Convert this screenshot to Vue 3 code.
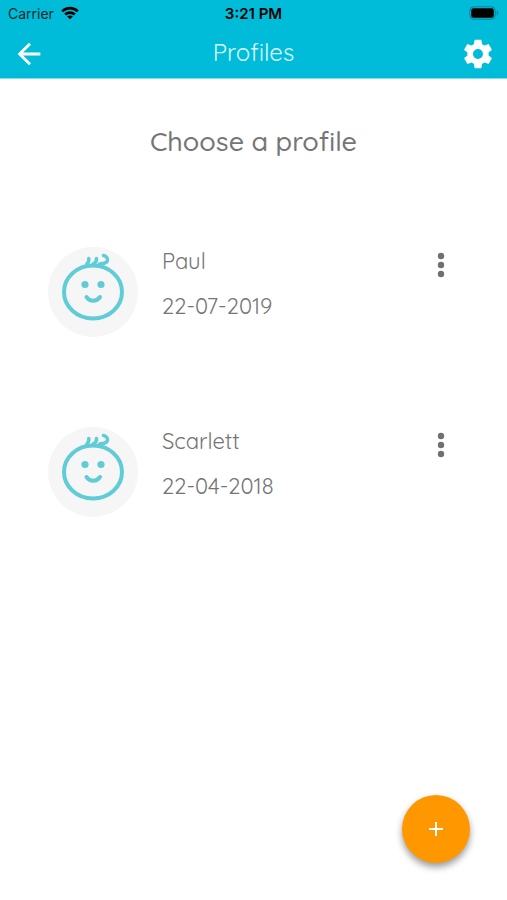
<template>
  <div class="screen">
    <header class="app-header">
      <!-- Status bar -->
      <div class="status-bar">
        <div class="carrier">
          <span>Carrier</span>
          <svg class="wifi" viewBox="0 0 20 14" aria-hidden="true">
            <path d="M1.300 5.200a12.300 12.300 0 0 1 17.400 0" />
            <path d="M4.600 8.700a7.700 7.700 0 0 1 10.800 0" />
            <path class="wifi-dot" d="M6.800 11a4.500 4.500 0 0 1 6.400 0L10 14z" />
          </svg>
        </div>
        <span class="time">3:21 PM</span>
        <div class="battery">
          <svg viewBox="0 0 30 14" aria-hidden="true">
            <rect class="battery-case" x="0.8" y="0.8" width="25.4" height="12.4" rx="4" />
            <rect x="2.2" y="2.2" width="22.600" height="9.600" rx="2.2" />
            <path class="battery-cap" d="M27.8 4.5v5c2-.8 2-4.2 0-5z" />
          </svg>
        </div>
      </div>

      <!-- Navigation -->
      <nav class="nav-bar">
        <button class="icon-btn" type="button" aria-label="Back">
          <svg viewBox="0 0 24 24">
            <path d="M20 11H7.83l5.59-5.59L12 4l-8 8 8 8 1.41-1.41L7.83 13H20v-2z" />
          </svg>
        </button>
        <h1 class="nav-title">Profiles</h1>
        <button class="icon-btn" type="button" aria-label="Settings">
          <svg viewBox="0 0 24 24">
            <path d="M19.43 12.98c.04-.32.07-.64.07-.98s-.03-.66-.07-.98l2.11-1.65c.19-.15.24-.42.12-.64l-2-3.46c-.12-.22-.39-.3-.61-.22l-2.49 1c-.52-.4-1.08-.73-1.69-.98l-.38-2.65C14.46 2.18 14.25 2 14 2h-4c-.25 0-.46.18-.49.42l-.38 2.65c-.61.25-1.17.59-1.69.98l-2.49-1c-.23-.09-.49 0-.61.22l-2 3.46c-.13.22-.07.49.12.64l2.11 1.65c-.04.32-.07.65-.07.98s.03.66.07.98l-2.11 1.65c-.19.15-.24.42-.12.64l2 3.46c.12.22.39.3.61.22l2.49-1c.52.4 1.08.73 1.69.98l.38 2.65c.03.24.24.42.49.42h4c.25 0 .46-.18.49-.42l.38-2.65c.61-.25 1.17-.59 1.69-.98l2.49 1c.23.09.49 0 .61-.22l2-3.46c.12-.22.07-.49-.12-.64l-2.11-1.65zM12 15.5c-1.93 0-3.5-1.57-3.5-3.5s1.57-3.5 3.5-3.5 3.5 1.57 3.5 3.5-1.57 3.5-3.5 3.5z" />
          </svg>
        </button>
      </nav>
    </header>

    <main class="content">
      <h2 class="heading">Choose a profile</h2>

      <ul class="profile-list">
        <li v-for="profile in profiles" :key="profile.name" class="profile">
          <div class="avatar">
            <svg viewBox="0 0 90 90" aria-hidden="true">
              <ellipse cx="45" cy="45" rx="29" ry="26.5" />
              <path class="hair" d="M40.800 11.500c.3 2.500-.6 4.500-2.300 6" />
              <path class="hair" d="M48.500 11.500c.3 2.800-1 4.500-3.500 5.500" />
              <path class="hair" d="M55.500 8.500c3.500.8 4.800 3.500 3.500 6-1.500 2.500-5 1.500-7.500 2.500" />
              <circle class="eye" cx="37" cy="37.500" r="3.600" />
              <circle class="eye" cx="53" cy="37.500" r="3.600" />
              <path d="M38.500 50c3 5 10 5 13.500 0" />
            </svg>
          </div>
          <div class="info">
            <span>{{ profile.name }}</span>
            <span>{{ profile.birthday }}</span>
          </div>
          <button class="menu-btn" type="button" :aria-label="`Options for ${profile.name}`">
            <svg viewBox="0 0 26 26">
              <circle cx="13" cy="4" r="3.2" />
              <circle cx="13" cy="13" r="3.2" />
              <circle cx="13" cy="22" r="3.2" />
            </svg>
          </button>
        </li>
      </ul>
    </main>

    <button class="add-btn" type="button" aria-label="Add profile">
      <svg viewBox="0 0 16 16">
        <path d="M8 1v14M1 8h14" />
      </svg>
    </button>
  </div>
</template>

<script setup>
import { ref } from 'vue';

const profiles = ref([
  { name: 'Paul', birthday: '22-07-2019' },
  { name: 'Scarlett', birthday: '22-04-2018' }
]);
</script>

<style>
body {
  margin: 0;
  background: #fff;
}
</style>

<style scoped>
.screen {
  min-height: 100vh;
  background: #fff;
  color: #757575;
  font-family: Quicksand, Lato, sans-serif;
}

button {
  padding: 0;
  border: none;
  background: none;
  cursor: pointer;
}

svg {
  display: block;
}

.app-header {
  background: #00bcd9;
  border-bottom: 1px solid #80deec;
}

.status-bar {
  display: grid;
  grid-template-columns: 1fr auto 1fr;
  align-items: center;
  height: 26px;
  padding: 0 8px;
  color: #06272c;
  font-family: Inter, sans-serif;
  font-size: 14px;
}

.carrier {
  display: flex;
  align-items: center;
  gap: 7px;
}

.wifi {
  width: 18px;
  height: 14px;
  fill: none;
  stroke: #000;
  stroke-width: 3;
}

.wifi-dot {
  fill: #000;
  stroke: none;
}

.time {
  color: #000;
  font-size: 15px;
  font-weight: 600;
}

.battery {
  justify-self: end;
}

.battery svg {
  width: 30px;
  height: 14px;
}

.battery-case {
  fill: none;
  stroke: #087f91;
  stroke-width: 1;
}

.battery-cap {
  fill: #087f91;
}

.nav-bar {
  display: flex;
  align-items: center;
  justify-content: space-between;
  height: 52px;
  padding: 0 12px;
}

.icon-btn svg {
  width: 34px;
  height: 34px;
  margin-top: 4px;
  fill: #fff;
}

.nav-title {
  margin: 0;
  color: #d9f9ff;
  font-size: 24px;
  font-weight: 400;
}

.content {
  padding: 44px 48px 0;
}

.heading {
  margin: 0;
  font-size: 27px;
  font-weight: 500;
  line-height: 36px;
  text-align: center;
}

.profile-list {
  display: flex;
  flex-direction: column;
  gap: 82px;
  margin: 80px 0 0;
  padding: 0;
  list-style: none;
}

.profile {
  display: flex;
  align-items: flex-start;
}

.avatar {
  width: 90px;
  height: 90px;
  margin-top: 8px;
  border-radius: 50%;
  background: #f6f6f6;
}

.avatar svg {
  width: 90px;
  height: 90px;
  fill: none;
  stroke: #5fccd6;
  stroke-width: 4;
  stroke-linecap: round;
}

.avatar .hair {
  stroke-width: 3.5;
}

.avatar .eye {
  fill: #5fccd6;
  stroke: none;
}

.info {
  display: flex;
  flex: 1;
  flex-direction: column;
  margin-left: 24px;
  color: #757575;
  font-size: 22px;
  line-height: 45px;
}

.menu-btn {
  margin-top: 13px;
  margin-right: 5px;
}

.menu-btn svg {
  width: 26px;
  height: 26px;
  fill: #707070;
}

.add-btn {
  position: fixed;
  right: 37px;
  bottom: 37px;
  display: flex;
  align-items: center;
  justify-content: center;
  width: 68px;
  height: 68px;
  border-radius: 50%;
  background: #ff9800;
  box-shadow: 0 4px 7px rgba(0, 0, 0, 0.4);
}

.add-btn svg {
  width: 16px;
  height: 16px;
  fill: none;
  stroke: #fff;
  stroke-width: 2;
}
</style>
